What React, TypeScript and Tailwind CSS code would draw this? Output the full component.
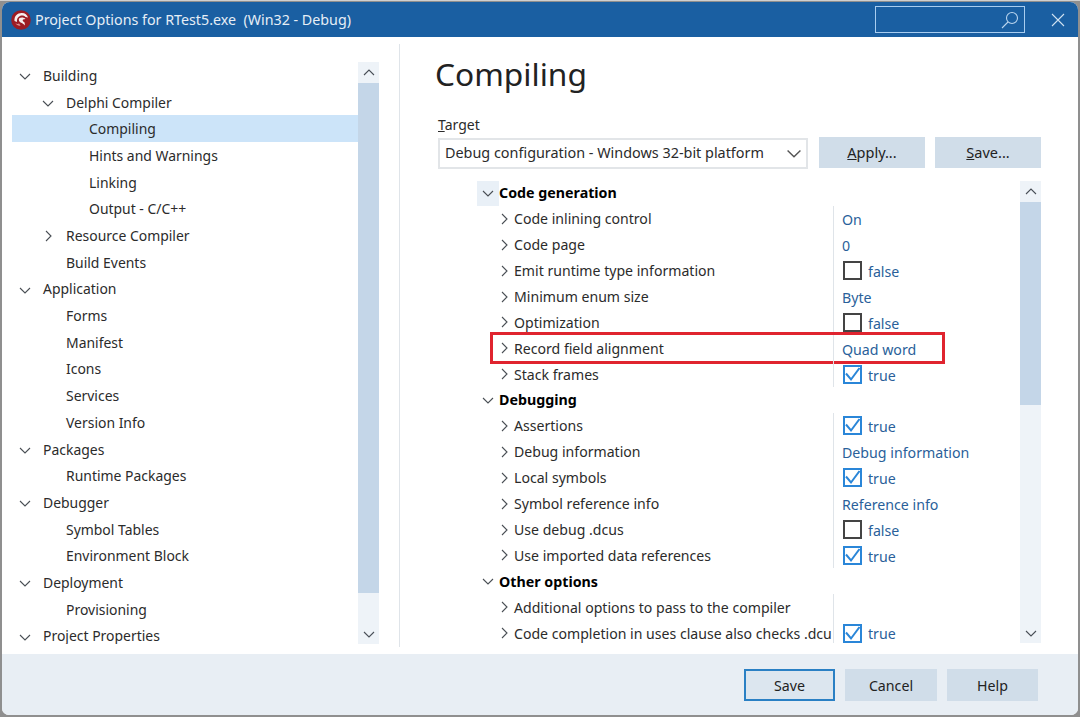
import React from 'react';

type TreeItem = { label: string; level: number; open?: boolean; closed?: boolean; selected?: boolean };

const tree: TreeItem[] = [
  { label: 'Building', level: 0, open: true },
  { label: 'Delphi Compiler', level: 1, open: true },
  { label: 'Compiling', level: 2, selected: true },
  { label: 'Hints and Warnings', level: 2 },
  { label: 'Linking', level: 2 },
  { label: 'Output - C/C++', level: 2 },
  { label: 'Resource Compiler', level: 1, closed: true },
  { label: 'Build Events', level: 1 },
  { label: 'Application', level: 0, open: true },
  { label: 'Forms', level: 1 },
  { label: 'Manifest', level: 1 },
  { label: 'Icons', level: 1 },
  { label: 'Services', level: 1 },
  { label: 'Version Info', level: 1 },
  { label: 'Packages', level: 0, open: true },
  { label: 'Runtime Packages', level: 1 },
  { label: 'Debugger', level: 0, open: true },
  { label: 'Symbol Tables', level: 1 },
  { label: 'Environment Block', level: 1 },
  { label: 'Deployment', level: 0, open: true },
  { label: 'Provisioning', level: 1 },
  { label: 'Project Properties', level: 0, open: true },
];

type Prop = { section?: boolean; name: string; value?: string; check?: boolean; marked?: boolean };

const props: Prop[] = [
  { section: true, name: 'Code generation' },
  { name: 'Code inlining control', value: 'On' },
  { name: 'Code page', value: '0' },
  { name: 'Emit runtime type information', check: false },
  { name: 'Minimum enum size', value: 'Byte' },
  { name: 'Optimization', check: false },
  { name: 'Record field alignment', value: 'Quad word', marked: true },
  { name: 'Stack frames', check: true },
  { section: true, name: 'Debugging' },
  { name: 'Assertions', check: true },
  { name: 'Debug information', value: 'Debug information' },
  { name: 'Local symbols', check: true },
  { name: 'Symbol reference info', value: 'Reference info' },
  { name: 'Use debug .dcus', check: false },
  { name: 'Use imported data references', check: true },
  { section: true, name: 'Other options' },
  { name: 'Additional options to pass to the compiler' },
  { name: 'Code completion in uses clause also checks .dcu', check: true },
];

const Chevron = ({ dir, className }: { dir: 'up' | 'down' | 'right'; className?: string }) => {
  const d = { up: 'M2 9 L7 4 L12 9', down: 'M2 5 L7 10 L12 5', right: 'M5 2 L10 7 L5 12' }[dir];
  return (
    <svg width="14" height="14" viewBox="0 0 14 14" fill="none" stroke="currentColor" strokeWidth="1.1" className={className}>
      <path d={d} />
    </svg>
  );
};

const Logo = () => (
  <svg width="20" height="20" viewBox="0 0 20 20">
    <circle cx="10" cy="10" r="9.8" fill="#9c1c24" />
    <path d="M3.5 11 C3 6 6.5 2.8 11 3 C14 3.1 16.2 4.8 17 7.5 L14.5 7 C13 5.6 11 5.2 9 5.9 C6.8 6.8 5.6 9 6 12 Z" fill="#f6eeee" />
    <path d="M8 8.5 C10 7 13 7.3 14.5 9 L12 9.6 C11.2 10.6 12 11.6 13.6 12.4 L14 15.6 C12.6 14.4 11.4 13 9.6 12.6 C8.2 11.8 7.4 10 8 8.5 Z" fill="#f6eeee" />
    <path d="M4.4 13 C5.6 14.2 7 14.2 8 13.6 L9.6 15.6 C7.6 16.2 5.6 15.2 4.4 13 Z" fill="#d98f92" />
  </svg>
);

const Scrollbar = ({ thumbClass, heightClass }: { thumbClass: string; heightClass: string }) => (
  <div className={`w-[21px] ${heightClass} bg-[#eef3f8] flex flex-col items-center text-[#4a5058]`}>
    <div className="h-[21px] w-full flex items-center justify-center">
      <Chevron dir="up" />
    </div>
    <div className={`${thumbClass} w-full bg-[#c4d6e8]`} />
    <div className="flex-1" />
    <div className="h-[21px] w-full flex items-center justify-center">
      <Chevron dir="down" />
    </div>
  </div>
);

const Check = ({ on }: { on: boolean }) => (
  <span className={`w-[19px] h-[19px] ml-[1px] mr-[-1px] border-2 shrink-0 flex items-center justify-center ${on ? 'border-[#2a86d8]' : 'border-[#444444]'}`}>
    {on && (
      <svg width="15" height="15" viewBox="0 0 15 15" fill="none" stroke="#2a86d8" strokeWidth="2">
        <path d="M1 6.5 L6 12.5 L14.5 1" />
      </svg>
    )}
  </span>
);

const TreeRow = ({ item }: { item: TreeItem }) => {
  const indent = ['pl-[6px]', 'pl-[29px]', 'pl-[52px]'][item.level];
  return (
    <div className={`h-[26.7px] pt-[2px] flex items-center ${indent} ${item.selected ? 'bg-[#cce4f9]' : ''}`}>
      <span className="w-[25px] shrink-0 text-[#4a4f55]">
        {item.open && <Chevron dir="down" />}
        {item.closed && <Chevron dir="right" />}
      </span>
      <span className="whitespace-nowrap">{item.label}</span>
    </div>
  );
};

const PropRow = ({ prop }: { prop: Prop }) => {
  if (prop.section) {
    return (
      <div className="h-[25.9px] flex items-center">
        <span className={`w-[22px] h-full flex items-center justify-center text-[#4a4f55] ${prop.name === 'Code generation' ? 'bg-[#e9f0f7]' : ''}`}>
          <Chevron dir="down" />
        </span>
        <span className="font-bold text-black whitespace-nowrap text-[14.25px]">{prop.name}</span>
      </div>
    );
  }
  return (
    <div className="relative h-[25.9px] flex items-center">
      <span className="w-[37px] shrink-0 flex justify-end pr-[3px] text-[#4a4f55]">
        <Chevron dir="right" />
      </span>
      <span className="w-[319px] shrink-0 whitespace-nowrap">{prop.name}</span>
      <div className="h-full border-l border-[#dfe4e9] pl-[8px] flex items-center gap-[7px] text-[#2a5f9a] text-[14.2px]">
        {prop.check !== undefined && <Check on={prop.check} />}
        {prop.check !== undefined ? (
          <span className="pt-[2px]">{prop.check ? 'true' : 'false'}</span>
        ) : (
          <span className="whitespace-nowrap pt-[2px]">{prop.value}</span>
        )}
      </div>
      {prop.marked && <div className="absolute left-[13px] top-[-3px] w-[455px] h-[32px] border-[3px] border-[#e0242f]" />}
    </div>
  );
};

const AccelButton = ({ width, accel, rest }: { width: string; accel: string; rest: string }) => (
  <button className={`${width} h-[31px] bg-[#d0dde9] text-[#222] text-[14.5px] flex items-center justify-center`}>
    <span className="underline">{accel}</span>
    {rest}
  </button>
);

export default function App() {
  return (
    <div className="w-[1080px] h-[717px] bg-[#8f8f8f] border-t border-[#cfcfcf] pl-[2px] pt-[1px] text-[14.1px] text-[#2b2b2b] font-['Noto_Sans','Open_Sans',sans-serif]">
      <div className="w-[1076px] h-[713px] rounded-t-[8px] rounded-b-[7px] overflow-hidden bg-white flex flex-col">
        <div className="h-[35px] shrink-0 bg-[#1a5fa2] flex items-center text-[#e6eef6]">
          <span className="ml-[9px] mr-[4px] flex"><Logo /></span>
          <span className="whitespace-pre text-[14.27px]">Project Options for RTest5.exe  (Win32 - Debug)</span>
          <div className="ml-auto w-[150px] h-[27px] border border-[#a8cdf0] flex items-center justify-end pr-[5px]">
            <svg width="18" height="18" viewBox="0 0 18 18" fill="none" stroke="#b9d4ee" strokeWidth="1.1">
              <circle cx="11" cy="7" r="5.5" />
              <path d="M7 11 L1 17" />
            </svg>
          </div>
          <div className="w-[53px] flex pl-[26px]">
            <svg width="14" height="14" viewBox="0 0 14 14" stroke="#cfe0f0" strokeWidth="1.1">
              <path d="M1 1 L13 13 M13 1 L1 13" />
            </svg>
          </div>
        </div>

        <div className="flex-1 flex min-h-0">
          <div className="w-[398px] shrink-0 pl-[10px] pt-[18px] flex items-start pr-[20px] mt-[7px] mb-[7px] border-r border-[#dfe4e9]">
            <div className="w-[346px] h-[582px] overflow-hidden text-[13.95px]">
              {tree.map((item) => (
                <TreeRow key={item.label} item={item} />
              ))}
            </div>
            <Scrollbar thumbClass="h-[510px]" heightClass="h-[582px]" />
          </div>

          <div className="flex-1 min-w-0 pl-[35px] pr-[35px]">
            <h1 className="text-[31.7px] leading-[44px] mt-[15px] text-[#222]">Compiling</h1>
            <div className="mt-[18px] ml-[3px] h-[22px] leading-[22px] text-[14px]"><span className="underline">T</span>arget</div>
            <div className="flex ml-[3px] mt-[1px] items-start">
              <div className="w-[370px] h-[31px] mt-[1px] border-2 border-[#e2e5e8] pl-[5px] pr-[3px] pb-[2px] flex items-center justify-between text-[14.4px]">
                <span>Debug configuration - Windows 32-bit platform</span>
                <Chevron dir="down" className="text-[#555] w-[18px] h-[18px]" />
              </div>
              <div className="ml-[11px]"><AccelButton width="w-[106px]" accel="A" rest="pply..." /></div>
              <div className="ml-[10px]"><AccelButton width="w-[106px]" accel="S" rest="ave..." /></div>
            </div>
            <div className="flex mt-[12px] ml-[42px]">
              <div className="w-[543px] h-[462px] overflow-hidden">
                <div className="-mt-[1px]">
                  {props.map((prop) => (
                    <PropRow key={prop.name} prop={prop} />
                  ))}
                </div>
              </div>
              <Scrollbar thumbClass="h-[203px]" heightClass="h-[462px]" />
            </div>
          </div>
        </div>

        <div className="h-[61px] shrink-0 bg-[#e8eef4] flex items-center justify-end gap-[10px] pr-[40px] text-[14.2px]">
          <button className="w-[91px] h-[32px] pt-[2px] border-2 border-[#2a80c4] bg-[#dce6ef] text-[#222]">Save</button>
          <button className="w-[92px] h-[32px] pt-[2px] bg-[#d0dde9] text-[#222]">Cancel</button>
          <button className="w-[91px] h-[32px] pt-[2px] bg-[#d0dde9] text-[#222]">Help</button>
        </div>
      </div>
    </div>
  );
}
